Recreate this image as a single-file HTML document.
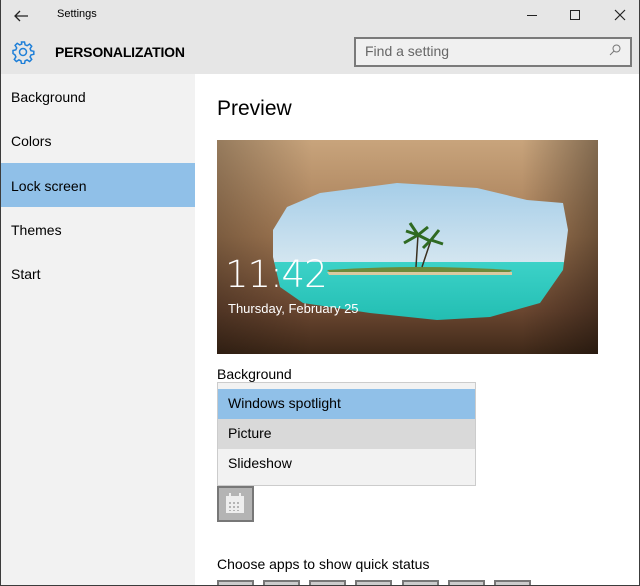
<!DOCTYPE html>
<html><head><style>
*{margin:0;padding:0;box-sizing:border-box}
html,body{width:640px;height:586px;overflow:hidden}
body{position:relative;background:#fff;font-family:"Liberation Sans",sans-serif;color:#000}
.abs{position:absolute}
.frame{position:absolute;left:0;top:0;width:640px;height:586px;border:1px solid #3c3c3c;border-top:none;pointer-events:none}
.nav{font-size:14px;left:11px}
.opt{position:absolute;left:218px;width:257px;height:30px;font-size:14px;padding:6px 0 0 10px}
.sq{position:absolute;top:580px;width:37px;height:6px;background:#ccc;border:2px solid #777;border-bottom:none}
</style></head><body>
<div class="abs" style="left:0;top:0;width:640px;height:74px;background:#e6e6e6"></div>
<div class="abs" style="left:0;top:74px;width:195px;height:512px;background:#f2f2f2"></div>
<svg class="abs" style="left:13px;top:9px" width="16" height="14"><path d="M15 7H2M7 2L2 7l5 5" fill="none" stroke="#222" stroke-width="1.3"/></svg>
<div class="abs" style="left:57px;top:8px;font-size:11px">Settings</div>
<div class="abs" style="left:527px;top:15px;width:10px;height:1px;background:#222"></div>
<div class="abs" style="left:570px;top:10px;width:10px;height:10px;border:1.3px solid #222"></div>
<svg class="abs" style="left:614px;top:9px" width="12" height="12"><path d="M1 1l10 10M11 1L1 11" stroke="#222" stroke-width="1.2"/></svg>
<svg class="abs" style="left:11px;top:40px" width="24" height="24" viewBox="0 0 24 24"><g fill="none" stroke="#1e7fd8" stroke-width="1.5"><circle cx="12" cy="12" r="3.5"/><path d="M10.5 2h3l.6 2.8 2 .9 2.5-1.6 2.1 2.1-1.6 2.5.9 2 2.8.6v3l-2.8.6-.9 2 1.6 2.5-2.1 2.1-2.5-1.6-2 .9-.6 2.8h-3l-.6-2.8-2-.9-2.5 1.6-2.1-2.1 1.6-2.5-.9-2L2 13.5v-3l2.8-.6.9-2-1.6-2.5 2.1-2.1 2.5 1.6 2-.9z"/></g></svg>
<div class="abs" style="left:55px;top:44px;font-size:14px;font-weight:bold;letter-spacing:-.2px">PERSONALIZATION</div>
<div class="abs" style="left:354px;top:37px;width:278px;height:30px;border:2px solid #7a7a7a;background:#f0f0f0"></div>
<div class="abs" style="left:365px;top:43px;font-size:14px;color:#666">Find a setting</div>
<svg class="abs" style="left:609px;top:44px" width="12" height="12"><circle cx="7.5" cy="4.5" r="3.5" fill="none" stroke="#777"/><path d="M5 7L1 11" stroke="#777"/></svg>
<div class="abs nav" style="top:89px">Background</div>
<div class="abs nav" style="top:133px">Colors</div>
<div class="abs" style="left:1px;top:163px;width:194px;height:44px;background:#90c0e8"></div>
<div class="abs nav" style="top:178px">Lock screen</div>
<div class="abs nav" style="top:222px">Themes</div>
<div class="abs nav" style="top:266px">Start</div>
<div class="abs" style="left:217px;top:97px;font-size:21px">Preview</div>
<svg class="abs" style="left:217px;top:140px" width="381" height="214" viewBox="0 0 381 214">
<defs>
<linearGradient id="sky" x1="0" y1="0" x2="0" y2="1"><stop offset="0" stop-color="#8cc0e4"/><stop offset="1" stop-color="#d4e6f0"/></linearGradient>
<linearGradient id="sea" x1="0" y1="0" x2="0" y2="1"><stop offset="0" stop-color="#3cd2c8"/><stop offset="1" stop-color="#14b2a6"/></linearGradient>
<linearGradient id="rockv" x1="0" y1="0" x2="0" y2="1"><stop offset="0" stop-color="#c8a47c"/><stop offset=".45" stop-color="#a47a54"/><stop offset=".8" stop-color="#6a4630"/><stop offset="1" stop-color="#3e2818"/></linearGradient>
<linearGradient id="rockh" x1="0" y1="0" x2="1" y2="0"><stop offset="0" stop-color="#000" stop-opacity=".25"/><stop offset=".25" stop-color="#000" stop-opacity="0"/><stop offset=".8" stop-color="#000" stop-opacity="0"/><stop offset="1" stop-color="#000" stop-opacity=".35"/></linearGradient>
<clipPath id="op"><path d="M56 90L70 67 103 53 180 43 260 48 310 60 346 63 351 90 346 130 323 163 273 177 220 180 153 173 86 163 63 147 56 117Z"/></clipPath>
</defs>
<rect width="381" height="214" fill="url(#rockv)"/>
<rect width="381" height="214" fill="url(#rockh)"/>
<g clip-path="url(#op)">
<rect width="381" height="123" fill="url(#sky)"/>
<rect y="122" width="381" height="92" fill="url(#sea)"/>
<path d="M110 130Q200 124 295 130L290 134H115Z" fill="#6d8a3a"/>
<path d="M110 132H295V135H112Z" fill="#d9c9a0"/>
<path d="M199 127L201 95M205 127L214 100" stroke="#3a3020" stroke-width="1.5"/>
<path d="M201 95l-14 8M201 95l12 6M201 95l-8-12M201 95l10-8M201 95l-12-4M214 100l12 4M214 100l-8 8M214 100l8-10" stroke="#2f6a22" stroke-width="3"/>
</g>
<text x="8" y="147" font-family="DejaVu Sans" font-weight="200" font-size="37" fill="#fff" letter-spacing="-1">11:42</text>
<text x="11" y="173" font-family="Liberation Sans" font-size="13" fill="#fff">Thursday, February 25</text>
</svg>
<div class="abs" style="left:217px;top:366px;font-size:14px">Background</div>
<div class="abs" style="left:217px;top:382px;width:259px;height:104px;border:1px solid #ccc;background:#f2f2f2"></div>
<div class="opt" style="top:389px;background:#90c0e8">Windows spotlight</div>
<div class="opt" style="top:419px;background:#d9d9d9">Picture</div>
<div class="opt" style="top:449px">Slideshow</div>
<div class="abs" style="left:217px;top:486px;width:37px;height:36px;background:#b4b4b4;border:2px solid #777"></div>
<svg class="abs" style="left:225px;top:492px" width="20" height="22"><rect x="1" y="4" width="18" height="17" fill="#eee"/><rect x="4" y="1" width="2" height="5" fill="#eee"/><rect x="14" y="1" width="2" height="5" fill="#eee"/><g fill="#b4b4b4"><rect x="4" y="10" width="2" height="2"/><rect x="8" y="10" width="2" height="2"/><rect x="12" y="10" width="2" height="2"/><rect x="4" y="14" width="2" height="2"/><rect x="8" y="14" width="2" height="2"/><rect x="12" y="14" width="2" height="2"/><rect x="4" y="18" width="2" height="1"/><rect x="8" y="18" width="2" height="1"/><rect x="12" y="18" width="2" height="1"/></g></svg>
<div class="abs" style="left:217px;top:556px;font-size:14px">Choose apps to show quick status</div>
<div class="sq" style="left:217px"></div><div class="sq" style="left:263px"></div><div class="sq" style="left:309px"></div><div class="sq" style="left:355px"></div><div class="sq" style="left:402px"></div><div class="sq" style="left:448px"></div><div class="sq" style="left:494px"></div>
<div class="frame"></div>
</body></html>
